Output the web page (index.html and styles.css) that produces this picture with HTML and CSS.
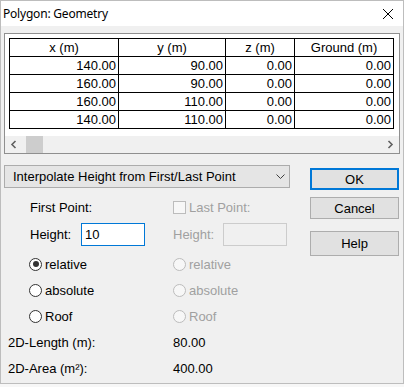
FILE: index.html
```html
<!DOCTYPE html>
<html lang="en">
<head>
  <meta charset="UTF-8">
  <title>Polygon: Geometry</title>
  <link rel="stylesheet" href="styles.css">
</head>
<body>

  <div class="window">
    <div class="titlebar">
      <span class="title">Polygon: Geometry</span>
      <svg class="close" width="12" height="12" viewBox="0 0 12 12">
        <path d="M1 1 L11 11 M11 1 L1 11" stroke="#000" stroke-width="1" fill="none"/>
      </svg>
    </div>

    <!-- Point list -->
    <div class="grid-frame">
      <table class="points">
        <colgroup>
          <col style="width:109px">
          <col style="width:107px">
          <col style="width:69px">
          <col style="width:99px">
        </colgroup>
        <thead>
          <tr><th>x (m)</th><th>y (m)</th><th>z (m)</th><th>Ground (m)</th></tr>
        </thead>
        <tbody id="pointRows"></tbody>
      </table>
      <div class="hscroll">
        <svg class="arrow" width="8" height="9" viewBox="0 0 8 9">
          <path d="M6 1 L2.5 4.5 L6 8" stroke="#606060" stroke-width="1.6" fill="none"/>
        </svg>
        <div class="thumb"></div>
        <div class="track"></div>
        <svg class="arrow" width="8" height="9" viewBox="0 0 8 9">
          <path d="M2 1 L5.5 4.5 L2 8" stroke="#606060" stroke-width="1.6" fill="none"/>
        </svg>
      </div>
    </div>

    <div class="lower">
      <div class="left">
        <div class="dropdown">
          <span>Interpolate Height from First/Last Point</span>
          <svg width="9" height="5" viewBox="0 0 9 5">
            <path d="M0.5 0.5 L4.5 4.5 L8.5 0.5" stroke="#404040" stroke-width="1" fill="none"/>
          </svg>
        </div>

        <div class="form">
          <div class="cell indent">First Point:</div>
          <div class="cell">
            <span class="check"></span><span class="muted">Last Point:</span>
          </div>

          <div class="cell indent">
            <span class="lbl">Height:</span><div class="edit active">10</div>
          </div>
          <div class="cell">
            <span class="lbl lbl-r muted">Height:</span><div class="edit off"></div>
          </div>

          <div class="cell indent-r"><span class="radio on"></span>relative</div>
          <div class="cell"><span class="radio off"></span><span class="muted">relative</span></div>

          <div class="cell indent-r"><span class="radio"></span>absolute</div>
          <div class="cell"><span class="radio off"></span><span class="muted">absolute</span></div>

          <div class="cell indent-r"><span class="radio"></span>Roof</div>
          <div class="cell"><span class="radio off"></span><span class="muted">Roof</span></div>

          <div class="cell">2D-Length (m):</div>
          <div class="cell">80.00</div>

          <div class="cell">2D-Area (m²):</div>
          <div class="cell">400.00</div>
        </div>
      </div>

      <div class="buttons">
        <button class="btn default">OK</button>
        <button class="btn cancel">Cancel</button>
        <button class="btn help">Help</button>
      </div>
    </div>
  </div>

  <script>
    const points = [
      [140, 90, 0, 0],
      [160, 90, 0, 0],
      [160, 110, 0, 0],
      [140, 110, 0, 0]
    ];

    const tbody = document.getElementById('pointRows');
    points.forEach(p => {
      const tr = document.createElement('tr');
      p.forEach(v => {
        const td = document.createElement('td');
        td.innerText = v.toFixed(2);
        tr.appendChild(td);
      });
      tbody.appendChild(tr);
    });
  </script>

</body>
</html>
```

FILE: styles.css
```css
body {
  margin: 0;
  background-color: #f7f7f7;
  font-family: "Liberation Sans", Arial, sans-serif;
  font-size: 13px;
  color: #000;
}
.window {
  width: 404px;
  height: 384px;
  box-sizing: border-box;
  border: 1px solid #bdbdbd;
  background-color: #f0f0f0;
  overflow: hidden;
}
.titlebar {
  height: 25px;
  background: #fff;
  display: flex;
  align-items: center;
  justify-content: space-between;
  padding: 0 9px 0 2px;
}
.title {
  font-family: "Noto Sans", sans-serif;
  font-size: 12px;
  letter-spacing: -0.2px;
}
/* Point list */
.grid-frame {
  margin: 7px 3px 0 3px;
  height: 115px;
  border: 1px solid #8f8f8f;
  background: #fff;
  padding-top: 4px;
  display: flex;
  flex-direction: column;
}
.points {
  border-collapse: collapse;
  table-layout: fixed;
  width: 385px;
  margin-left: 4px;
}
.points th, .points td {
  border: 1px solid #000;
  height: 17px;
  padding: 0 2px;
  font-weight: normal;
  line-height: 17px;
  white-space: nowrap;
  overflow: hidden;
}
.points th {
  text-align: center;
}
.points td {
  text-align: right;
}
.hscroll {
  margin-top: auto;
  height: 17px;
  background: #f0f0f0;
  display: flex;
  align-items: center;
}
.hscroll .arrow {
  width: 17px;
  flex: none;
}
.thumb {
  width: 17px;
  height: 17px;
  background: #cdcdcd;
  margin-left: 4px;
}
.track {
  flex: 1;
}
/* Lower part */
.lower {
  display: flex;
  padding: 0 4px 0 3px;
}
.left {
  width: 287px;
}
.dropdown {
  margin-top: 11px;
  height: 21px;
  border: 1px solid #acacac;
  background: #e5e5e5;
  display: flex;
  align-items: center;
  justify-content: space-between;
  padding: 0 4px 0 8px;
}
.form {
  display: grid;
  grid-template-columns: 165px 1fr;
  grid-template-rows: 22px 33px repeat(5, 26px);
  padding-left: 4px;
  margin-top: 8px;
}
.cell {
  display: flex;
  align-items: center;
  white-space: nowrap;
}
.indent {
  padding-left: 22px;
}
.indent-r {
  padding-left: 21px;
}
.muted {
  color: #a0a0a0;
}
.lbl {
  width: 51px;
}
.lbl-r {
  width: 50px;
}
.edit {
  width: 59px;
  height: 21px;
  display: flex;
  align-items: center;
  padding-left: 3px;
}
.edit.active {
  border: 1px solid #0078d7;
  background: #fff;
}
.edit.off {
  border: 1px solid #cccccc;
  background: #f0f0f0;
}
.check {
  width: 11px;
  height: 11px;
  border: 1px solid #bcbcbc;
  background: #f7f7f7;
  margin-right: 3px;
}
.radio {
  width: 11px;
  height: 11px;
  border: 1px solid #333;
  border-radius: 50%;
  background: #fff;
  margin-right: 3px;
  display: flex;
  align-items: center;
  justify-content: center;
}
.radio.on::after {
  content: "";
  width: 6px;
  height: 6px;
  border-radius: 50%;
  background: #333;
}
.radio.off {
  border-color: #bcbcbc;
  background: #f7f7f7;
}
.buttons {
  margin-left: 20px;
  display: flex;
  flex-direction: column;
}
.btn {
  width: 89px;
  border: 1px solid #adadad;
  background: #e1e1e1;
  font-family: "Liberation Sans", Arial, sans-serif;
  font-size: 13px;
  color: #000;
  padding: 0;
}
.btn.default {
  margin-top: 14px;
  height: 22px;
  border: 2px solid #0078d7;
}
.btn.cancel {
  margin-top: 7px;
  height: 22px;
}
.btn.help {
  margin-top: 12px;
  height: 25px;
}
```
